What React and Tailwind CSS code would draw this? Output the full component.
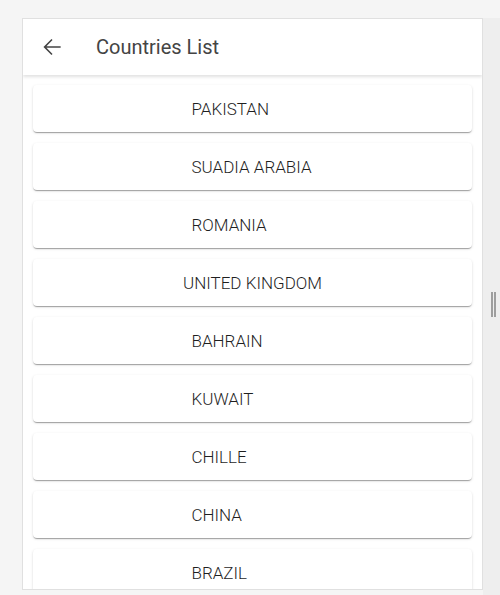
import React from 'react';

const countries = [
  'PAKISTAN',
  'SUADIA ARABIA',
  'ROMANIA',
  'UNITED KINGDOM',
  'BAHRAIN',
  'KUWAIT',
  'CHILLE',
  'CHINA',
  'BRAZIL',
  'TURKEY',
];

export default function App() {
  return (
    <div className="flex h-[595px] w-[500px] overflow-hidden bg-[#f5f5f5] pt-[18px] font-['Roboto',sans-serif]">
      <div className="ml-[22px] flex h-[572px] w-[461px] flex-col overflow-hidden border border-[#e0e0e0] bg-white">
        <header className="relative z-10 flex h-[56px] shrink-0 items-center bg-white shadow-[0_2px_3px_rgba(0,0,0,0.12)]">
          <svg className="ml-[16px]" width="26" height="26" viewBox="0 0 24 24" fill="none">
            <path d="M20 11.25H6.9l5.6-5.6L11.5 4.6 4.1 12l7.4 7.4 1-1.05-5.6-5.6H20v-1.5z" fill="#444" />
          </svg>
          <h1 className="ml-[31px] text-[20px] text-[#444]">Countries List</h1>
        </header>
        <div className="flex flex-1 flex-col gap-[11px] overflow-hidden px-[10px] pt-[10px]">
          {countries.map((c) => (
            <div
              key={c}
              className="flex h-[47px] shrink-0 items-center justify-center rounded-[4px] bg-white pt-[2px] shadow-[0_2px_1px_-1px_rgba(0,0,0,0.2),0_1px_1px_0_rgba(0,0,0,0.14),0_1px_3px_0_rgba(0,0,0,0.12)]"
            >
              <span className="min-w-[122px] whitespace-nowrap text-[17px] font-light text-[#1f1f1f]">{c}</span>
            </div>
          ))}
        </div>
      </div>
      <div className="relative flex-1 bg-[#eeeeee]">
        <div className="absolute left-[8px] top-[274px] flex gap-[1px]">
          <div className="h-[25px] w-[2px] bg-[#9e9e9e]" />
          <div className="h-[25px] w-[2px] bg-[#9e9e9e]" />
        </div>
      </div>
    </div>
  );
}
